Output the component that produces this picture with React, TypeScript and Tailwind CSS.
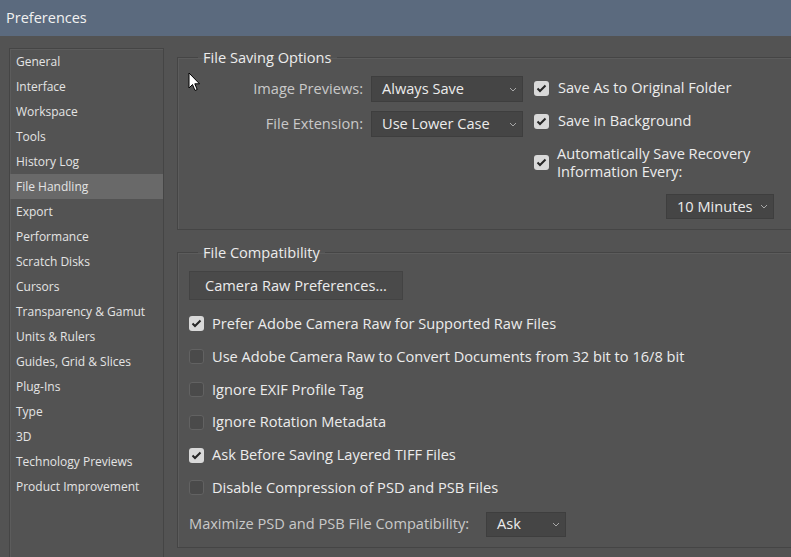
import React from "react";

const font = { fontFamily: '"Open Sans", "Noto Sans", sans-serif' };

function Chevron() {
  return (
    <svg width="8" height="5" viewBox="0 0 8 5" className="shrink-0">
      <polyline points="1,1 4,4 7,1" fill="none" stroke="#a8a8a8" strokeWidth="1" />
    </svg>
  );
}

function Select({ value, w, h = 26 }: { value: string; w: number; h?: number }) {
  return (
    <div
      className="flex items-center justify-between border border-[#3e3e3e] bg-[#454545] pl-[10px] pr-[5px] text-[14.6px] text-[#ececec]"
      style={{ width: w, height: h }}
    >
      <span>{value}</span>
      <Chevron />
    </div>
  );
}

function Check({ checked }: { checked: boolean }) {
  return checked ? (
    <div className="flex h-[15px] w-[15px] shrink-0 items-center justify-center rounded-[3px] bg-[#d9d9d9]">
      <svg width="11" height="9" viewBox="0 0 11 9">
        <polyline points="1.5,4.5 4,7 9.5,1.5" fill="none" stroke="#262626" strokeWidth="2" />
      </svg>
    </div>
  ) : (
    <div className="h-[15px] w-[15px] shrink-0 rounded-[3px] border border-[#626262] bg-[#4a4a4a]" />
  );
}

const sideItems = [
  "General",
  "Interface",
  "Workspace",
  "Tools",
  "History Log",
  "File Handling",
  "Export",
  "Performance",
  "Scratch Disks",
  "Cursors",
  "Transparency & Gamut",
  "Units & Rulers",
  "Guides, Grid & Slices",
  "Plug-Ins",
  "Type",
  "3D",
  "Technology Previews",
  "Product Improvement",
];

const compat: [boolean, string][] = [
  [true, "Prefer Adobe Camera Raw for Supported Raw Files"],
  [false, "Use Adobe Camera Raw to Convert Documents from 32 bit to 16/8 bit"],
  [false, "Ignore EXIF Profile Tag"],
  [false, "Ignore Rotation Metadata"],
  [true, "Ask Before Saving Layered TIFF Files"],
  [false, "Disable Compression of PSD and PSB Files"],
];

export default function App() {
  return (
    <div className="relative flex h-[557px] w-[791px] flex-col overflow-hidden bg-[#535353]" style={font}>
      <div className="flex h-[36px] shrink-0 items-center bg-[#5b6a7e] pl-[6px] text-[14.5px] text-[#f2f2f2]">
        Preferences
      </div>
      <div className="flex min-h-0 flex-1 pl-[9px] pt-[12px]">
        <div className="h-[520px] w-[155px] shrink-0 border border-[#454545] shadow-[inset_1px_1px_0_#5c5c5c]">
          {sideItems.map((s) => (
            <div
              key={s}
              className={
                "flex h-[25px] items-center pl-[6px] text-[12px] text-[#e4e4e4] " +
                (s === "File Handling" ? "bg-[#696969]" : "")
              }
            >
              {s}
            </div>
          ))}
        </div>
        <div className="-mt-[1px] ml-[13px] flex w-[620px] shrink-0 flex-col">
          <fieldset className="border border-[#454545] shadow-[inset_1px_1px_0_#5c5c5c]">
            <legend className="ml-[20px] px-[5px] text-[14.6px] leading-[20px] text-[#ececec]">File Saving Options</legend>
            <div className="flex items-start">
              <div className="flex w-[345px] flex-col gap-[9px] pt-[9px]">
                <div className="flex items-center justify-end gap-[8px]">
                  <span className="text-[14.6px] text-[#c9c9c9]">Image Previews:</span>
                  <Select value="Always Save" w={152} />
                </div>
                <div className="flex items-center justify-end gap-[8px]">
                  <span className="text-[14.6px] text-[#c9c9c9]">File Extension:</span>
                  <Select value="Use Lower Case" w={152} />
                </div>
              </div>
              <div className="ml-[11px] flex flex-col pt-[9px] text-[14.6px] text-[#ececec]">
                <div className="flex h-[24px] items-center gap-[9px]">
                  <Check checked />
                  <span>Save As to Original Folder</span>
                </div>
                <div className="mt-[9px] flex h-[24px] items-center gap-[9px]">
                  <Check checked />
                  <span>Save in Background</span>
                </div>
                <div className="mt-[11px] flex h-[36px] items-center gap-[8px]">
                  <Check checked />
                  <span className="leading-[18px]">
                    Automatically Save Recovery
                    <br />
                    Information Every:
                  </span>
                </div>
              </div>
            </div>
            <div className="mt-[14px] flex justify-end pb-[10px] pr-[22px]">
              <Select value="10 Minutes" w={108} h={25} />
            </div>
          </fieldset>
          <fieldset className="mt-[12px] border border-[#454545] shadow-[inset_1px_1px_0_#5c5c5c]">
            <legend className="ml-[20px] px-[5px] text-[14.6px] leading-[20px] text-[#ececec]">File Compatibility</legend>
            <div className="flex flex-col pl-[11px] pt-[9px] pb-[10px]">
              <div className="flex h-[29px] w-[214px] items-center justify-center border border-[#434343] bg-[#4a4a4a] text-[14.6px] text-[#ececec]">
                Camera Raw Preferences...
              </div>
              <div className="mt-[7.5px] flex flex-col">
                {compat.map(([c, t]) => (
                  <div key={t} className="flex h-[32.8px] items-center gap-[8px] text-[14.6px] text-[#ececec]">
                    <Check checked={c} />
                    <span>{t}</span>
                  </div>
                ))}
              </div>
              <div className="mt-[7.5px] flex items-center">
                <span className="w-[297px] text-[14.6px] text-[#c9c9c9]">Maximize PSD and PSB File Compatibility:</span>
                <Select value="Ask" w={80} h={25} />
              </div>
            </div>
          </fieldset>
        </div>
      </div>
      <svg className="absolute left-[188px] top-[72px]" width="13" height="20" viewBox="0 0 13 20">
        <path d="M1,1 L1,16 L4.5,12.5 L7,18.5 L9.2,17.5 L6.8,11.8 L11.5,11.8 Z" fill="#ffffff" stroke="#000000" strokeWidth="1" strokeLinejoin="round" />
      </svg>
    </div>
  );
}
